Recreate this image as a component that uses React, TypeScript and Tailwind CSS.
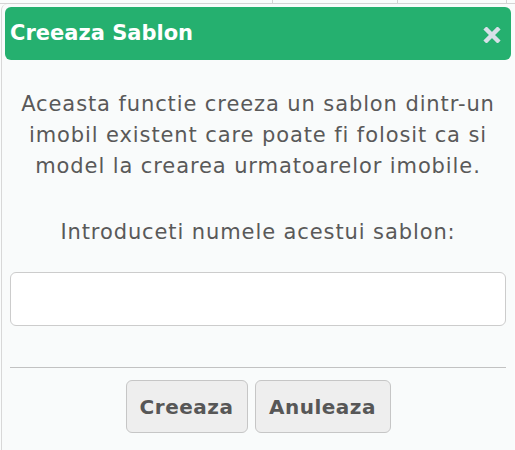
import React from 'react';

export default function App() {
  return (
    <div className="relative h-[450px] w-[515px] overflow-hidden bg-[#fafcfc] font-['DejaVu_Sans',sans-serif]">
      {/* table behind the dialog */}
      <div className="flex h-[4px] border-b border-[#d4d4d4]">
        <div className="w-[273px] border-r border-[#d4d4d4]" />
        <div className="w-[125px] border-r border-[#d4d4d4]" />
        <div className="w-[109px] border-r border-[#d4d4d4]" />
      </div>

      <div className="mx-[1px] flex h-[446px] flex-col rounded-t-[6px] border-l border-[#d8d8d8] bg-[#f9fbfb] px-[3px] pt-[3px]">
        <div className="flex h-[53px] items-center justify-between rounded-[6px] bg-[#25b06f] pl-[5px] pr-[10px]">
          <span className="text-[21px] font-bold text-white">Creeaza Sablon</span>
          <svg width="18" height="16" viewBox="0 0 18 16" className="mt-[3px]">
            <path d="M3.5 2.5 L14.5 13.5 M14.5 2.5 L3.5 13.5" stroke="#d8e0e8" strokeWidth="4.4" strokeLinecap="square" />
          </svg>
        </div>

        <div className="flex flex-col items-center pt-[29px] text-center text-[21px] leading-[31px] tracking-[0.9px] text-[#595959]">
          <p>
            Aceasta functie creeza un sablon dintr-un
            <br />
            imobil existent care poate fi folosit ca si
            <br />
            model la crearea urmatoarelor imobile.
          </p>
          <p className="mt-[35px]">Introduceti numele acestui sablon:</p>
        </div>

        <div className="px-[5px] pt-[24px]">
          <input
            type="text"
            className="block h-[54px] w-full rounded-[6px] border border-[#cccccc] bg-white px-3 outline-none"
          />
        </div>

        <div className="mx-[5px] mt-[41px] border-t border-[#c2c2c2]" />

        <div className="flex justify-center gap-[7px] pt-[12px]">
          <button className="h-[53px] w-[122px] rounded-[6px] border border-[#c6c6c6] bg-[#eeeeee] text-[20px] font-bold tracking-[0.5px] text-[#575757]">
            Creeaza
          </button>
          <button className="h-[53px] w-[136px] rounded-[6px] border border-[#c6c6c6] bg-[#eeeeee] text-[20px] font-bold tracking-[0.5px] text-[#575757]">
            Anuleaza
          </button>
        </div>
      </div>
    </div>
  );
}
